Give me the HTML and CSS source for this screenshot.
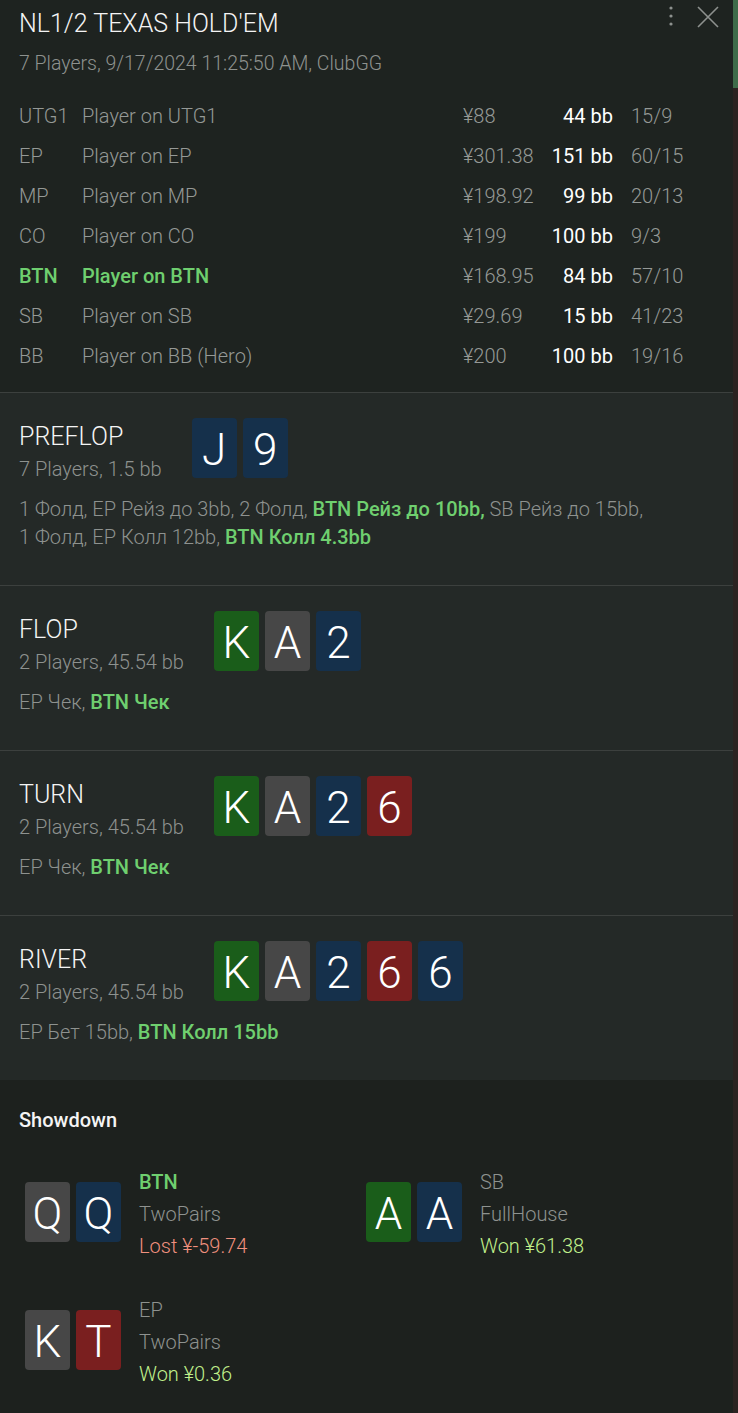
FILE: index.html
```html
<!DOCTYPE html>
<html lang="ru">
<head>
<meta charset="utf-8">
<title>NL1/2 TEXAS HOLD'EM</title>
<link rel="stylesheet" href="styles.css">
</head>
<body>
<div class="app">
  <main class="panel">
    <header class="hand-head">
      <div class="head-top">
        <h1 class="title">NL1/2 TEXAS HOLD'EM</h1>
        <div class="head-actions">
          <svg class="icon-kebab" width="6" height="22" viewBox="0 0 6 22" aria-hidden="true">
            <circle cx="3" cy="3" r="1.6"/><circle cx="3" cy="11" r="1.6"/><circle cx="3" cy="19" r="1.6"/>
          </svg>
          <svg class="icon-close" width="22" height="22" viewBox="0 0 22 22" aria-hidden="true">
            <path d="M1 1 L21 21 M21 1 L1 21"/>
          </svg>
        </div>
      </div>
      <p class="meta">7 Players, 9/17/2024 11:25:50 AM, ClubGG</p>
      <div class="players">
        <div class="prow"><span>UTG1</span><span>Player on UTG1</span><span>¥88</span><span class="bb">44 bb</span><span class="ratio">15/9</span></div>
        <div class="prow"><span>EP</span><span>Player on EP</span><span>¥301.38</span><span class="bb">151 bb</span><span class="ratio">60/15</span></div>
        <div class="prow"><span>MP</span><span>Player on MP</span><span>¥198.92</span><span class="bb">99 bb</span><span class="ratio">20/13</span></div>
        <div class="prow"><span>CO</span><span>Player on CO</span><span>¥199</span><span class="bb">100 bb</span><span class="ratio">9/3</span></div>
        <div class="prow hero-opp"><span>BTN</span><span>Player on BTN</span><span>¥168.95</span><span class="bb">84 bb</span><span class="ratio">57/10</span></div>
        <div class="prow"><span>SB</span><span>Player on SB</span><span>¥29.69</span><span class="bb">15 bb</span><span class="ratio">41/23</span></div>
        <div class="prow"><span>BB</span><span>Player on BB (Hero)</span><span>¥200</span><span class="bb">100 bb</span><span class="ratio">19/16</span></div>
      </div>
    </header>

    <section class="street">
      <div class="street-head">
        <div class="street-info">
          <h2 class="street-name">PREFLOP</h2>
          <p class="street-sub">7 Players, 1.5 bb</p>
        </div>
        <div class="cards">
          <span class="card c-d">J</span><span class="card c-d">9</span>
        </div>
      </div>
      <p class="actions">1 Фолд, EP Рейз до 3bb, 2 Фолд, <b class="hl">BTN Рейз до 10bb,</b> SB Рейз до 15bb,<br>1 Фолд, EP Колл 12bb, <b class="hl">BTN Колл 4.3bb</b></p>
    </section>

    <section class="street">
      <div class="street-head">
        <div class="street-info">
          <h2 class="street-name">FLOP</h2>
          <p class="street-sub">2 Players, 45.54 bb</p>
        </div>
        <div class="cards">
          <span class="card c-c">K</span><span class="card c-s">A</span><span class="card c-d">2</span>
        </div>
      </div>
      <p class="actions">EP Чек, <b class="hl">BTN Чек</b></p>
    </section>

    <section class="street">
      <div class="street-head">
        <div class="street-info">
          <h2 class="street-name">TURN</h2>
          <p class="street-sub">2 Players, 45.54 bb</p>
        </div>
        <div class="cards">
          <span class="card c-c">K</span><span class="card c-s">A</span><span class="card c-d">2</span><span class="card c-h">6</span>
        </div>
      </div>
      <p class="actions">EP Чек, <b class="hl">BTN Чек</b></p>
    </section>

    <section class="street street-last">
      <div class="street-head">
        <div class="street-info">
          <h2 class="street-name">RIVER</h2>
          <p class="street-sub">2 Players, 45.54 bb</p>
        </div>
        <div class="cards">
          <span class="card c-c">K</span><span class="card c-s">A</span><span class="card c-d">2</span><span class="card c-h">6</span><span class="card c-d">6</span>
        </div>
      </div>
      <p class="actions">EP Бет 15bb, <b class="hl">BTN Колл 15bb</b></p>
    </section>

    <section class="showdown">
      <h3 class="sd-title">Showdown</h3>
      <div class="sd-grid">
        <div class="sd-hand">
          <div class="cards"><span class="card c-s">Q</span><span class="card c-d">Q</span></div>
          <div class="sd-info">
            <span class="sd-pos hl">BTN</span>
            <span class="sd-combo">TwoPairs</span>
            <span class="sd-res lost">Lost ¥-59.74</span>
          </div>
        </div>
        <div class="sd-hand">
          <div class="cards"><span class="card c-c">A</span><span class="card c-d">A</span></div>
          <div class="sd-info">
            <span class="sd-pos">SB</span>
            <span class="sd-combo">FullHouse</span>
            <span class="sd-res won">Won ¥61.38</span>
          </div>
        </div>
        <div class="sd-hand">
          <div class="cards"><span class="card c-s">K</span><span class="card c-h">T</span></div>
          <div class="sd-info">
            <span class="sd-pos">EP</span>
            <span class="sd-combo">TwoPairs</span>
            <span class="sd-res won">Won ¥0.36</span>
          </div>
        </div>
      </div>
    </section>
  </main>
  <aside class="scrollbar"><div class="thumb"></div></aside>
</div>
</body>
</html>
```
FILE: styles.css
```css
* { box-sizing: border-box; }

html, body {
  margin: 0;
  padding: 0;
  background: #1e2320;
}

body {
  font-family: Roboto, "Noto Sans", "Liberation Sans", sans-serif;
  font-weight: 300;
  color: #8e928f;
  font-size: 20px;
}

.app {
  display: flex;
  width: 738px;
  height: 1413px;
  overflow: hidden;
}

.panel {
  flex: 1;
  display: flex;
  flex-direction: column;
  min-width: 0;
}

.scrollbar {
  width: 5px;
  background: #2b2321;
  flex: none;
}
.thumb {
  height: 88px;
  background: #3e6b49;
}

/* header */
.hand-head {
  background: #1e2320;
  padding: 7px 0 16px 19px;
  border-bottom: 1px solid #3c403e;
}
.head-top {
  display: flex;
  justify-content: space-between;
  align-items: flex-start;
}
.title {
  margin: 0;
  font-size: 25px;
  line-height: 33px;
  font-weight: 300;
  color: #f4f4f4;
}
.head-actions {
  display: flex;
  align-items: flex-start;
  gap: 23px;
  margin-top: -3px;
  padding-right: 14px;
}
.icon-kebab { fill: #8d918e; margin-top: 1px; }
.icon-close { stroke: #8d918e; stroke-width: 1.6; fill: none; margin-top: 2px; }

.meta {
  margin: 10px 0 0;
  font-size: 19.5px;
  line-height: 28px;
}

.players {
  margin-top: 18px;
}
.prow {
  display: grid;
  grid-template-columns: 63px 381px 75px 75px 1fr;
  height: 40px;
  line-height: 40px;
  font-size: 20px;
  color: #959996;
}
.prow .bb {
  text-align: right;
  color: #ffffff;
  font-weight: 400;
}
.prow .ratio { padding-left: 18px; }
.prow.hero-opp span:nth-child(-n+2) {
  color: #6fcf6f;
  font-weight: 500;
}

/* streets */
.street {
  background: #242927;
  padding: 25px 19px 34px;
  border-bottom: 1px solid #3c403e;
}
.street-last { border-bottom: none; }

.street-head {
  display: flex;
  align-items: flex-start;
  gap: 30px;
}
.street-name {
  margin: 0;
  font-size: 25px;
  line-height: 38px;
  font-weight: 300;
  color: #f4f4f4;
}
.street-sub {
  margin: 0;
  font-size: 20px;
  line-height: 26px;
}

.cards {
  display: flex;
  gap: 6px;
}
.card {
  width: 45px;
  height: 60px;
  border-radius: 4px;
  display: flex;
  align-items: center;
  justify-content: center;
  font-size: 44px;
  font-weight: 300;
  line-height: 1;
  color: #ffffff;
  padding-top: 4px;
}
.c-d { background: #15304b; }
.c-c { background: #1a5d1a; }
.c-s { background: #474747; }
.c-h { background: #7a1f1f; }

.actions {
  margin: 13px 0 0;
  font-size: 20px;
  line-height: 28px;
}
.hl {
  color: #6fcf6f;
  font-weight: 500;
}

/* showdown */
.showdown {
  flex: 1;
  background: #1d211e;
  padding: 26px 19px 0;
}
.sd-title {
  margin: 0;
  font-size: 20px;
  line-height: 28px;
  font-weight: 500;
  color: #f4f4f4;
}
.sd-grid {
  margin-top: 28px;
  padding-left: 6px;
  display: grid;
  grid-template-columns: 341px 1fr;
  row-gap: 28px;
}
.sd-hand {
  display: flex;
  align-items: center;
  gap: 18px;
}
.sd-info {
  display: flex;
  flex-direction: column;
  padding-top: 4px;
  font-size: 20px;
  line-height: 32px;
}
.sd-pos.hl { font-weight: 500; }
.lost { color: #f0907e; }
.won { color: #c0f08c; }
```
